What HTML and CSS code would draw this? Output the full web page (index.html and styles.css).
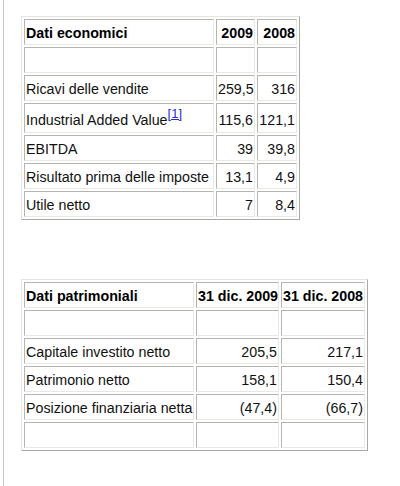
FILE: index.html
```html
<!DOCTYPE html>
<html>
<head>
<meta charset="utf-8">
<link rel="stylesheet" href="styles.css">
</head>
<body>
<div class="page">
  <table class="data t1">
    <colgroup><col class="c1a"><col class="c2a"><col class="c3a"></colgroup>
    <tr class="head"><td>Dati economici</td><td class="num">2009</td><td class="num">2008</td></tr>
    <tr><td>&nbsp;</td><td></td><td></td></tr>
    <tr><td>Ricavi delle vendite</td><td class="num">259,5</td><td class="num">316</td></tr>
    <tr class="tall"><td>Industrial Added Value<sup><a href="#n1">[1]</a></sup></td><td class="num">115,6</td><td class="num">121,1</td></tr>
    <tr><td>EBITDA</td><td class="num">39</td><td class="num">39,8</td></tr>
    <tr><td>Risultato prima delle imposte</td><td class="num">13,1</td><td class="num">4,9</td></tr>
    <tr><td>Utile netto</td><td class="num">7</td><td class="num">8,4</td></tr>
  </table>

  <table class="data t2">
    <colgroup><col class="c1b"><col class="c2b"><col class="c3b"></colgroup>
    <tr class="head"><td>Dati patrimoniali</td><td class="num">31 dic. 2009</td><td class="num">31 dic. 2008</td></tr>
    <tr><td>&nbsp;</td><td></td><td></td></tr>
    <tr><td>Capitale investito netto</td><td class="num">205,5</td><td class="num">217,1</td></tr>
    <tr><td>Patrimonio netto</td><td class="num">158,1</td><td class="num">150,4</td></tr>
    <tr><td>Posizione finanziaria netta</td><td class="num">(47,4)</td><td class="num">(66,7)</td></tr>
    <tr><td>&nbsp;</td><td></td><td></td></tr>
  </table>
</div>
</body>
</html>
```

FILE: styles.css
```css
html, body {
  margin: 0;
  padding: 0;
  background: #fff;
}
body {
  font-family: "Liberation Sans", Arial, sans-serif;
  font-size: 14.25px;
  color: #111;
}
.page {
  margin-left: 3px;
  border-left: 1px solid #c9c9c9;
  min-height: 486px;
  box-sizing: border-box;
  padding-left: 17px;
  padding-top: 16px;
}
.data {
  border-collapse: separate;
  border-spacing: 2px;
  border: 1px solid;
  border-color: #e4e4e0 #a8a8a4 #a8a8a4 #e4e4e0;
  table-layout: fixed;
}
.data td {
  border: 1px solid;
  border-color: #b4b4b0 #e8e8e4 #e8e8e4 #b4b4b0;
  padding: 2px 1px 0 1px;
  height: 22px;
  line-height: 22px;
  white-space: nowrap;
  vertical-align: middle;
}
.data .tall td {
  height: 24px;
  padding-top: 4px;
  padding-bottom: 0;
}
.data .head td {
  font-weight: bold;
  color: #000;
}
.data .num {
  text-align: right;
}
.t1 { width: 279px; }
.c1a { width: 190px; }
.c2a { width: 39px; }
.c3a { width: 40px; }

.t2 {
  width: 347px;
  margin-top: 59px;
}
.c1b { width: 170px; }
.c2b { width: 83px; }
.c3b { width: 84px; }

sup {
  font-size: 13px;
  line-height: 0;
  vertical-align: 7px;
}
sup a {
  color: #2a2ad0;
  text-decoration: underline;
}
```
